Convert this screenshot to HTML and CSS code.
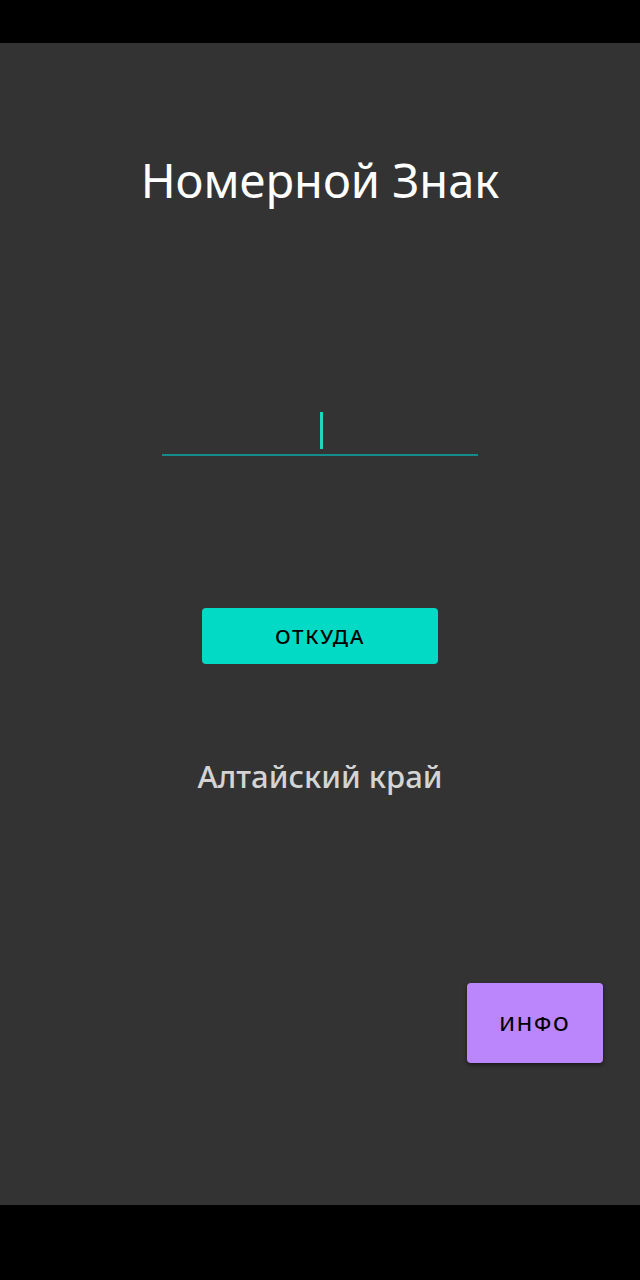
FILE: index.html
```html
<!DOCTYPE html>
<html lang="ru">
<head>
<meta charset="utf-8">
<link rel="stylesheet" href="styles.css">
</head>
<body>
<div class="screen">
  <div class="statusbar"></div>
  <main class="content">
    <h1 class="title">Номерной Знак</h1>
    <div class="field">
      <span class="cursor"></span>
    </div>
    <button class="btn btn-from">ОТКУДА</button>
    <p class="region">Алтайский край</p>
    <div class="info-row">
      <button class="btn btn-info">ИНФО</button>
    </div>
  </main>
  <div class="navbar"></div>
</div>
</body>
</html>
```
FILE: styles.css
```css
html, body {
  margin: 0;
  padding: 0;
  background: #000;
}
.screen {
  width: 640px;
  height: 1280px;
  display: flex;
  flex-direction: column;
  font-family: "Noto Sans", "Open Sans", sans-serif;
}
.statusbar {
  height: 43px;
  background: #000;
}
.navbar {
  height: 75px;
  background: #000;
}
.content {
  flex: 1;
  background: #333333;
  display: flex;
  flex-direction: column;
  align-items: center;
}
.title {
  margin: 106px 0 0;
  font-size: 47px;
  font-weight: 400;
  line-height: 62px;
  color: #ffffff;
}
.field {
  margin-top: 195px;
  width: 316px;
  height: 43px;
  border-bottom: 2px solid #148c8c;
  display: flex;
  justify-content: center;
  align-items: flex-end;
  padding-bottom: 5px;
  box-sizing: content-box;
}
.cursor {
  width: 3px;
  height: 37px;
  background: #1fd6bf;
  margin-left: 2px;
}
.btn {
  border: none;
  border-radius: 4px;
  font-family: "Noto Sans", "Open Sans", sans-serif;
  font-size: 20.5px;
  font-weight: 500;
  letter-spacing: 1.8px;
  color: #000;
  padding: 0;
}
.btn-from {
  margin-top: 152px;
  width: 236px;
  height: 56px;
  background: #03dac5;
}
.region {
  margin: 91px 0 0;
  font-size: 31px;
  font-weight: 500;
  line-height: 42px;
  color: #d4d4d4;
}
.info-row {
  align-self: stretch;
  display: flex;
  justify-content: flex-end;
  padding-right: 37px;
  margin-top: 186px;
}
.btn-info {
  width: 136px;
  height: 80px;
  background: #bb86fc;
  box-shadow: 0 2px 4px rgba(0,0,0,0.5);
}
```
